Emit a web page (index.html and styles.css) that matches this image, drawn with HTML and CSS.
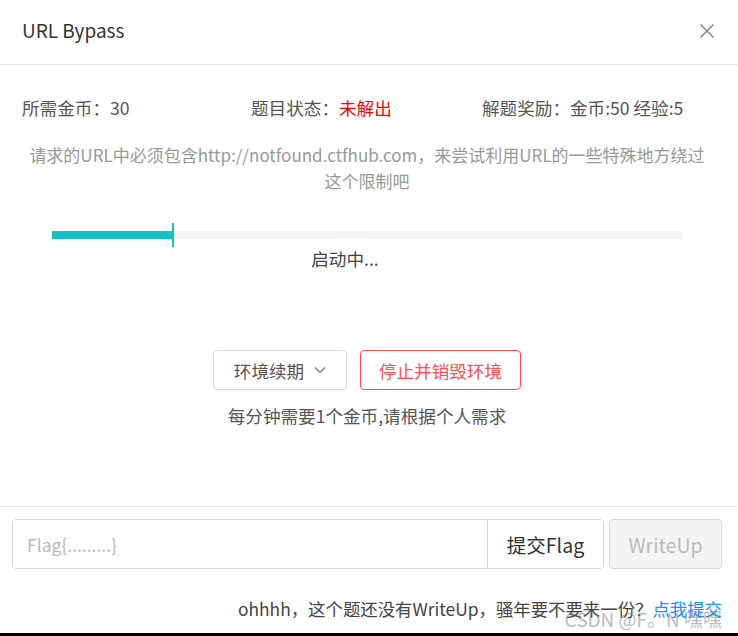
FILE: index.html
```html
<!DOCTYPE html>
<html lang="zh-CN">
<head>
    <meta charset="UTF-8">
    <title>URL Bypass</title>
    <link rel="stylesheet" href="styles.css">
</head>
<body>
    <div class="modal">
        <div class="modal-header">
            <span class="modal-title">URL Bypass</span>
            <button class="close-btn" aria-label="close">
                <svg viewBox="0 0 16 16" width="16" height="16">
                    <path d="M1.5 1.5 L14.5 14.5 M14.5 1.5 L1.5 14.5"/>
                </svg>
            </button>
        </div>

        <div class="modal-body">
            <div class="info-row">
                <div class="info-item">所需金币：30</div>
                <div class="info-item">题目状态：<span class="unsolved">未解出</span></div>
                <div class="info-item">解题奖励：金币:50 经验:5</div>
            </div>

            <p class="desc">请求的URL中必须包含http://notfound.ctfhub.com，来尝试利用URL的一些特殊地方绕过这个限制吧</p>

            <div class="progress">
                <div class="progress-fill" style="width: 19%"></div>
                <div class="progress-tick" style="left: 19%"></div>
            </div>
            <div class="status">启动中...</div>

            <div class="actions">
                <button class="btn btn-default">环境续期
                    <svg class="chevron" viewBox="0 0 12 8" width="12" height="8">
                        <path d="M1 1.5 L6 6.5 L11 1.5"/>
                    </svg>
                </button>
                <button class="btn btn-danger">停止并销毁环境</button>
            </div>
            <div class="note">每分钟需要1个金币,请根据个人需求</div>
        </div>

        <div class="modal-footer">
            <div class="flag-row">
                <div class="input-group">
                    <input type="text" class="flag-input" placeholder="Flag{.........}">
                    <button class="submit-btn">提交Flag</button>
                </div>
                <button class="writeup-btn" disabled>WriteUp</button>
            </div>
            <div class="writeup-tip">ohhhh，这个题还没有WriteUp，骚年要不要来一份？<a href="#" class="link">点我提交</a></div>
            <div class="watermark">CSDN @F。N 嘿嘿</div>
        </div>
    </div>
    <div class="bottom-edge"></div>
</body>
</html>
```

FILE: styles.css
```css
* {
    margin: 0;
    padding: 0;
    box-sizing: border-box;
}

body {
    font-family: "Noto Sans CJK SC", sans-serif;
    background: #fff;
    color: #333;
    width: 738px;
    height: 636px;
    overflow: hidden;
}

.modal {
    height: 633px;
    display: flex;
    flex-direction: column;
    position: relative;
}

.modal-header {
    height: 65px;
    border-bottom: 1px solid #e8e8e8;
    display: flex;
    align-items: center;
    justify-content: space-between;
    padding: 0 22px;
}

.modal-title {
    font-size: 19px;
    color: #333;
    margin-top: -5px;
}

.close-btn {
    background: none;
    border: none;
    width: 16px;
    height: 16px;
    margin-right: 1px;
    margin-top: -2px;
}

.close-btn svg path {
    stroke: #888;
    stroke-width: 1.5;
    fill: none;
}

.modal-body {
    height: 441px;
    padding: 31px 26px 0 22px;
}

.info-row {
    display: grid;
    grid-template-columns: 229px 231px 1fr;
    font-size: 17.6px;
    line-height: 24px;
    color: #555;
}

.unsolved {
    color: #f00;
}

.desc {
    margin-top: 22px;
    text-align: center;
    font-size: 17px;
    line-height: 26px;
    color: #999;
}

.progress {
    position: relative;
    margin: 37px 30px 0;
    height: 8px;
    background: #f4f4f4;
}

.progress-fill {
    height: 100%;
    background: #13c2c2;
}

.progress-tick {
    position: absolute;
    top: -8px;
    width: 2px;
    height: 24px;
    background: #13c2c2;
}

.status {
    margin-top: 8px;
    padding-right: 44px;
    text-align: center;
    font-size: 17.6px;
    line-height: 24px;
    color: #444;
}

.actions {
    margin-top: 79px;
    display: flex;
    justify-content: center;
    gap: 13px;
}

.btn {
    height: 40px;
    font-family: inherit;
    font-size: 17.6px;
    background: #fff;
    border-radius: 4px;
    display: flex;
    align-items: center;
    justify-content: center;
}

.btn-default {
    width: 134px;
    border: 1px solid #d9d9d9;
    color: #555;
    gap: 10px;
    box-shadow: 0 2px 0 rgba(0, 0, 0, 0.015);
}

.chevron path {
    stroke: #777;
    stroke-width: 1.2;
    fill: none;
}

.btn-danger {
    width: 161px;
    border: 1px solid #ff4d4f;
    color: #ff4d4f;
}

.note {
    margin-top: 14px;
    text-align: center;
    font-size: 17.6px;
    line-height: 24px;
    color: #555;
}

.modal-footer {
    border-top: 1px solid #e8e8e8;
    padding: 12px 16px 0 12px;
    flex: 1;
    position: relative;
}

.flag-row {
    display: flex;
    gap: 5px;
}

.input-group {
    display: flex;
    width: 592px;
    height: 50px;
    border: 1px solid #d9d9d9;
    border-radius: 4px;
    overflow: hidden;
}

.flag-input {
    flex: 1;
    border: none;
    outline: none;
    padding: 0 14px;
    font-family: inherit;
    font-size: 17.5px;
    color: #333;
}

.flag-input::placeholder {
    color: #bbb;
}

.submit-btn {
    width: 116px;
    border: none;
    border-left: 1px solid #d9d9d9;
    background: #fff;
    font-family: inherit;
    font-size: 19.5px;
    color: #333;
}

.writeup-btn {
    width: 113px;
    height: 50px;
    border: 1px solid #d9d9d9;
    border-radius: 4px;
    background: #f5f5f5;
    font-family: inherit;
    font-size: 19.5px;
    color: #bbb;
}

.writeup-tip {
    margin-top: 28px;
    text-align: right;
    font-size: 17.4px;
    line-height: 24px;
    color: #444;
}

.link {
    color: #1890ff;
    text-decoration: none;
}

.watermark {
    position: absolute;
    right: 16px;
    bottom: 2px;
    font-size: 19px;
    color: rgba(120, 120, 120, 0.5);
    line-height: 24px;
}

.bottom-edge {
    height: 3px;
    background: #000;
}
```
